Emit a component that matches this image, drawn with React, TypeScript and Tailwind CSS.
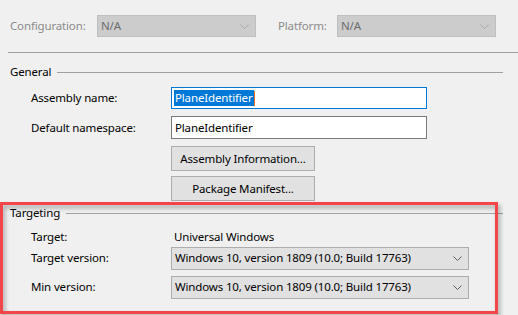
import React from 'react';

const font = { fontFamily: '"Noto Sans", "Segoe UI", sans-serif' };

function Chevron({ color = '#606060' }: { color?: string }) {
  return (
    <svg width="9" height="5" viewBox="0 0 9 5" className="shrink-0">
      <polyline points="0.5,0.5 4.5,4.5 8.5,0.5" fill="none" stroke={color} strokeWidth="1" />
    </svg>
  );
}

function DisabledCombo({ value }: { value: string }) {
  return (
    <div className="flex h-[22px] w-[159px] shrink-0 items-center justify-between border border-[#bfbfbf] bg-[#cccccc] pl-[3px] pr-[6px] text-[#6d6d6d]">
      <span>{value}</span>
      <Chevron color="#a8a8a8" />
    </div>
  );
}

function Combo({ value }: { value: string }) {
  return (
    <div className="flex h-[23px] w-[298px] shrink-0 items-center justify-between border border-[#adadad] bg-[#e1e1e1] pl-[3px] pr-[6px]">
      <span>{value}</span>
      <Chevron />
    </div>
  );
}

function GroupHeader({ title }: { title: string }) {
  return (
    <div className="flex h-[16px] items-center pl-[10px] pr-[15px]">
      <span>{title}</span>
      <div className="ml-[6px] h-px flex-1 bg-[#a0a0a0]" />
    </div>
  );
}

function Row({ label, children }: { label: string; children: React.ReactNode }) {
  return (
    <div className="flex items-center">
      <span className="w-[171px] shrink-0 whitespace-nowrap pl-[31px]">{label}</span>
      {children}
    </div>
  );
}

export default function App() {
  return (
    <div
      className="relative h-[315px] w-[518px] overflow-hidden bg-[#f0f0f0] text-[11.5px] leading-none tracking-[-0.15px] text-black"
      style={font}
    >
      <div className="flex items-center pt-[15px]">
        <span className="w-[97px] shrink-0 pl-[10px] text-[#8a8a8a]">Configuration:</span>
        <DisabledCombo value="N/A" />
        <span className="w-[81px] shrink-0 pl-[22px] text-[#8a8a8a]">Platform:</span>
        <DisabledCombo value="N/A" />
      </div>

      <div className="ml-[8px] mt-[15px] h-px bg-[#a0a0a0]" />

      <div className="mt-[11px]">
        <GroupHeader title="General" />
      </div>

      <div className="mt-[7px] flex flex-col gap-[7px]">
        <Row label="Assembly name:">
          <div className="flex h-[22px] w-[256px] items-center border border-[#0078d7] bg-white pl-[2px]">
            <span className="bg-[#0078d7] px-px py-[2px] text-white">PlaneIdentifier</span>
            <span className="h-[15px] w-px bg-[#e0702a]" />
          </div>
        </Row>
        <Row label="Default namespace:">
          <div className="flex h-[23px] w-[256px] items-center border border-[#7a7a7a] bg-white pl-[3px]">
            PlaneIdentifier
          </div>
        </Row>
      </div>

      <div className="ml-[171px] mt-[7px] flex flex-col gap-[5px]">
        <button className="h-[25px] w-[144px] border border-[#adadad] bg-[#e1e1e1]">
          Assembly Information...
        </button>
        <button className="h-[25px] w-[144px] border border-[#adadad] bg-[#e1e1e1]">
          Package Manifest...
        </button>
      </div>

      <div className="mt-[4px]">
        <GroupHeader title="Targeting" />
      </div>

      <div className="mt-[10px] flex items-center">
        <span className="w-[174px] shrink-0 pl-[31px]">Target:</span>
        <span>Universal Windows</span>
      </div>

      <div className="mt-[4px] flex flex-col gap-[6px]">
        <Row label="Target version:">
          <Combo value="Windows 10, version 1809 (10.0; Build 17763)" />
        </Row>
        <Row label="Min version:">
          <Combo value="Windows 10, version 1809 (10.0; Build 17763)" />
        </Row>
      </div>

      <div className="pointer-events-none absolute left-0 top-[202px] h-[112px] w-[498px] border-[3px] border-[#f34548] drop-shadow-[2px_3px_2px_rgba(0,0,0,0.35)]" />
    </div>
  );
}
